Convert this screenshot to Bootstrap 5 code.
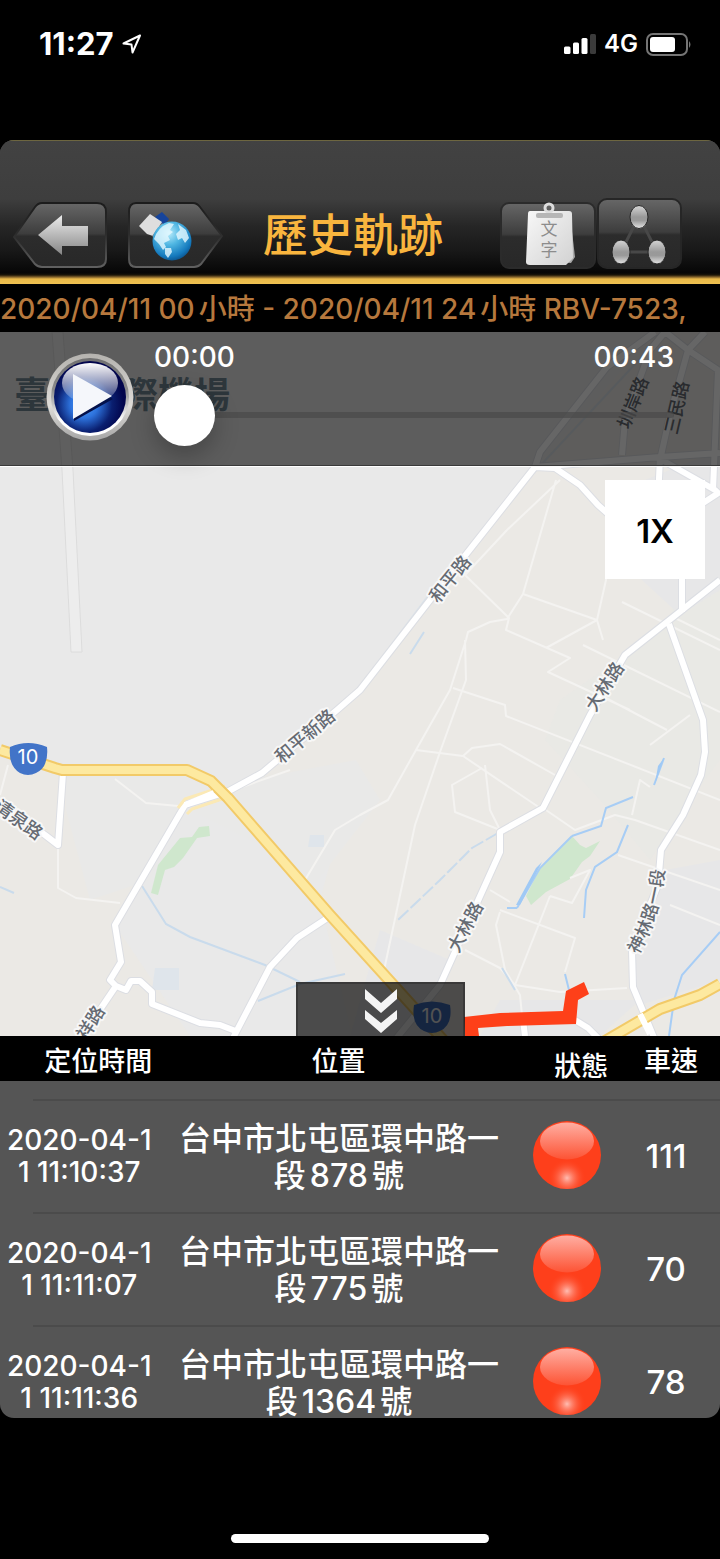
<!DOCTYPE html>
<html lang="zh-Hant">
<head>
<meta charset="utf-8">
<meta name="viewport" content="width=device-width, initial-scale=1">
<title>歷史軌跡</title>
<link rel="stylesheet" href="https://cdn.jsdelivr.net/npm/bootstrap@5.3.0/dist/css/bootstrap.min.css">
<style>
  body { background:#000; color:#fff; font-family:Inter,"Noto Sans CJK TC",sans-serif; }
  .status-bar { height:140px; padding:24px 28px 0 39px; }
  .status-bar > div { height:40px; }
  .clock { font-size:31px; line-height:40px; font-weight:700; }
  .net { font-size:24px; line-height:40px; font-weight:600; }
  .app-shell { border-radius:14px; background:#555; }
  .app-head { height:144px; padding:0 37px 15px 13px; border-top:1px solid #6d6640;
    background:linear-gradient(#424242 0,#3e3e3e 58px,#262626 85px,#181818 110px,#060606 132px,#1c1508 134px,#80602a 136px,#e9b949 138px,#f1c253 144px); }
  .plain-btn { background:none; border:0; padding:0; display:block; color:inherit; }
  .plain-btn svg, .map-art, .battery, .lamp { display:block; }
  .sat-btn { margin-left:21px; }
  .app-title { font-size:45px; line-height:66px; font-weight:500; color:#f9b53e; margin:0; padding-left:40px; }
  .range-bar { height:48px; line-height:50px; font-size:28px; font-weight:500; color:#b6783d; background:#000; }
  .map-area { height:704px; background:#e9e9e9; }
  .map-art { width:100%; height:100%; }
  .player { height:134px; padding:13px 46px 0 46px; gap:20px; background:rgba(0,0,0,.6); border-bottom:1px solid #3a3a3a; box-shadow:0 1px 0 #fff; }
  .play-btn { margin-top:8px; }
  .times { font-size:28px; line-height:24px; font-weight:500; }
  .seek { -webkit-appearance:none; appearance:none; width:100%; height:61px; margin:15px 0 0; background:none; display:block; }
  .seek::-webkit-slider-runnable-track { height:6px; border-radius:3px; background:rgba(74,74,74,.7); }
  .seek::-webkit-slider-thumb { -webkit-appearance:none; width:61px; height:61px; margin-top:-27px; border-radius:50%; background:#fff; box-shadow:0 10px 24px rgba(0,0,0,.25); }
  .speed-btn { width:100px; height:99px; margin:14px 15px 0 auto; padding-top:4px; background:#fff; color:#000; font-size:33px; font-weight:600; }
  .fold-btn { left:calc(50% - 64px); bottom:0; width:169px; height:54px; background:rgba(0,0,0,.68); border:2px solid rgba(40,40,40,.5); border-bottom:0; }
  .list-area { flex:1 1 0; min-height:382px; }
  .track-table { --bs-table-bg:transparent; --bs-table-color:#fff; color:#fff; table-layout:fixed; margin:0; text-align:center; border-collapse:collapse; }
  .track-table th, .track-table td { padding:0; border:0; background:none; box-shadow:none; vertical-align:middle; }
  .track-table thead { background:#000; }
  .track-table thead tr { height:45px; }
  .track-table thead th { font-size:27px; line-height:28px; font-weight:500; padding-top:6px; }
  .track-table thead .head-when { padding-left:38px; }
  .track-table thead .head-state { vertical-align:bottom; padding:0 0 0 32px; }
  .track-table thead .head-kmh { padding-left:10px; }
  .track-table .edge { height:18px; }
  .track-table .point { height:113px; background:linear-gradient(#4b4b4b,#4b4b4b) 33px 0/100% 2px no-repeat; }
  .track-table .when { font-size:28px; line-height:32px; font-weight:500; }
  .track-table .where { font-size:32px; line-height:37px; font-weight:500; padding:2px 9px 0 10px; }
  .track-table .kmh { font-size:33px; line-height:37px; font-weight:500; padding-top:2px; }
  .track-table .state { padding:0 0 2px 4px; }
  .col-when { width:22%; } .col-state { width:13%; } .col-kmh { width:15%; }
  .lamp { margin:0 auto; }
  .home-area { height:141px; padding-bottom:16px; }
  .home-bar { width:258px; height:9px; border-radius:5px; background:#fff; }
</style>
</head>
<body>
<div class="d-flex flex-column min-vh-100">
  <div class="status-bar d-flex justify-content-between">
    <div class="d-flex align-items-center gap-2">
      <span class="clock">11:27</span>
      <svg width="20" height="20" viewBox="0 0 20 20" fill="none" stroke="#fff" stroke-width="2" stroke-linejoin="round" aria-hidden="true"><path d="M18 1.500 1.500 9.500 9.500 10.500 10.500 18.500z"/></svg>
    </div>
    <div class="d-flex align-items-center gap-2">
      <svg width="32" height="20" viewBox="0 0 32 20" aria-hidden="true"><g fill="#fff"><rect x="0" y="12.500" width="6.500" height="7.500" rx="1.500"/><rect x="9" y="8.500" width="6" height="11.500" rx="1.500"/><rect x="17.500" y="4" width="6" height="16" rx="1.500"/></g><rect x="26" y="0" width="6" height="20" rx="1.500" fill="#3b3b3b"/></svg>
      <span class="net">4G</span>
      <svg class="battery" width="46" height="23" viewBox="0 0 46 23" aria-hidden="true"><rect x="1" y="1" width="40" height="21" rx="6" fill="none" stroke="#757575" stroke-width="2"/><rect x="4" y="4" width="25" height="15" rx="3" fill="#fff"/><path d="M43 8q3 3.500 0 7z" fill="#757575"/></svg>
    </div>
  </div>

  <main class="app-shell d-flex flex-column flex-fill overflow-hidden">
    <header class="app-head d-flex align-items-end">
      <button class="plain-btn" type="button" aria-label="返回">
        <svg width="94" height="67" viewBox="0 0 94 67">
          <defs><linearGradient id="btnFace" x2="0" y2="1"><stop stop-color="#676767"/><stop offset=".48" stop-color="#3d3d3d"/><stop offset=".52" stop-color="#2c2c2c"/><stop offset="1" stop-color="#282828"/></linearGradient>
          <linearGradient id="btnEdge" x2="0" y2="1"><stop stop-color="#1c1c1c"/><stop offset=".5" stop-color="#2d2d2d"/><stop offset="1" stop-color="#606060"/></linearGradient>
          <linearGradient id="arrowFill" x2="0" y2="1"><stop stop-color="#ececec"/><stop offset="1" stop-color="#858585"/></linearGradient></defs>
          <path d="M29 1H84Q93 1 93 10V57Q93 65 84 65H29Q25 65 22 62L1 35 22 5Q25 1 29 1z" fill="url(#btnFace)" stroke="url(#btnEdge)" stroke-width="2"/>
          <path d="M25 33 49 13V24H75V44H49V53z" fill="url(#arrowFill)"/>
        </svg>
      </button>
      <button class="plain-btn sat-btn" type="button" aria-label="衛星地圖">
        <svg width="95" height="67" viewBox="0 0 95 67">
          <defs><radialGradient id="globe" cx=".42" cy=".3" r=".75"><stop stop-color="#b9ecfb"/><stop offset=".4" stop-color="#4fb6e2"/><stop offset=".8" stop-color="#1479bd"/><stop offset="1" stop-color="#0a4d85"/></radialGradient></defs>
          <path d="M8 1H65Q69 1 72 5L94 34 73 62Q70 65 66 65H8Q1 65 1 57V10Q1 1 8 1z" fill="url(#btnFace)" stroke="url(#btnEdge)" stroke-width="2"/>
          <path d="M27 15 34 10 41 17 36 24z" fill="#16449b"/><path d="M11 24 22 12 34 20 25 34 19 32z" fill="#dedede"/><path d="M24 34 34 21 38 25 28 37z" fill="#8d8d8d"/>
          <circle cx="44" cy="39" r="19.500" fill="url(#globe)"/>
          <path d="M26 37Q30 25 41 21L46 22 42 28 45 30 40 34 42 38 36 41 38 45 35 48 31 42zM37 46 43 46 44 50 40 56 37 52zM50 22 58 28 61 36 57 41 54 36 50 38 48 32 52 28z" fill="#e6f9ff" opacity=".8"/>
        </svg>
      </button>
      <h1 class="app-title flex-fill text-nowrap">歷史軌跡</h1>
      <button class="plain-btn" type="button" aria-label="文字">
        <svg width="96" height="67" viewBox="0 0 96 67">
          <defs><linearGradient id="paper" x2="1" y2="1"><stop stop-color="#f8f8f8"/><stop offset="1" stop-color="#d2d2d2"/></linearGradient></defs>
          <rect x="1" y="1" width="94" height="65" rx="8" fill="url(#btnFace)" stroke="#2b2b2b" stroke-width="2"/>
          <path d="M34 12H70L75 55 71 61 28 57z" fill="#a9a9a9"/><path d="M30 9H69Q72 9 72 12L73 56 66 63H30Q26 63 26 60L28 12Q28 9 30 9z" fill="url(#paper)"/>
          <circle cx="49" cy="6" r="4" fill="none" stroke="#ddd" stroke-width="3"/><rect x="36" y="11" width="27" height="5" rx="2" fill="#b6b6b6"/>
          <g font-family="Noto Sans CJK TC, sans-serif" font-size="17" fill="#8c8c8c" text-anchor="middle"><text x="49" y="33">文</text><text x="49" y="54">字</text></g>
        </svg>
      </button>
      <button class="plain-btn" type="button" aria-label="軌跡點">
        <svg width="87" height="71" viewBox="0 0 87 71">
          <defs><linearGradient id="node" x2="0" y2="1"><stop stop-color="#d6d6d6"/><stop offset=".5" stop-color="#999"/><stop offset=".65" stop-color="#9a9a9a"/><stop offset="1" stop-color="#e6e6e6"/></linearGradient></defs>
          <rect x="2" y="1" width="83" height="69" rx="9" fill="url(#btnFace)" stroke="#262626" stroke-width="2"/>
          <path d="M43 18 25 54H61z" fill="none" stroke="#484848" stroke-width="3"/>
          <g fill="url(#node)" stroke="#262626"><ellipse cx="43" cy="19" rx="9" ry="11.500"/><ellipse cx="25" cy="54" rx="9" ry="12"/><ellipse cx="61" cy="54" rx="9" ry="12"/></g>
        </svg>
      </button>
    </header>

    <div class="range-bar text-nowrap overflow-hidden">2020/04/11 <span class="me-1">00</span>小時 - 2020/04/11 <span class="me-1">24</span>小時 RBV-7523,</div>

    <section class="map-area position-relative overflow-hidden">
      <div class="position-absolute top-0 start-0 w-100 h-100">
        <svg class="map-art" viewBox="0 332 720 704" preserveAspectRatio="xMidYMid slice" role="img" aria-label="地圖">
          <rect y="332" width="720" height="704" fill="#e9e9e9"/>
          <path d="M655 332 535 470 430 605 360 695 262 778 350 790 320 900 352 1036H0V752L60 770 70 790 185 808 115 925 190 1036 720 1036V332z" fill="#ebe9e5"/>
          <path d="M66 773H190L214 784 182 804 150 880 90 900 66 810zM190 810 260 778 356 760 380 800 310 890 270 850z" fill="#e9e9e8"/>
          <path d="M560 700 610 665 670 620 682 560 720 560V760L690 800 650 860 600 800 545 740z" fill="#e8e8e6" opacity=".7"/>
          <path d="M620 490 720 450V590L680 615 620 560zM665 870 720 860V980L640 1005 632 960zM380 930 450 960 420 1036 350 1036zM500 1000 640 1000 600 1036H480z" fill="#e7e7e8"/>
          <path d="M155 968H179V990H152zM310 835H324V847H308z" fill="#dfe5eb"/>
          <path d="M52 332 62 470 71 652H82L73 470 63 332z" fill="#ededed" stroke="#dcdcdc"/>
          <!-- parks -->
          <g fill="#cfe7cd"><path d="M199 827 209 826 210 836 197 838 183 858 174 867 165 870 158 895 151 893 158 865 180 838 192 837z"/><path d="M572 836 580 845 586 848 600 841 590 856 582 862 570 879 546 892 531 905 526 896 540 868 555 852z"/></g>
          <!-- local lanes -->
          <g fill="none" stroke="#f4f3f1" stroke-width="2" stroke-linejoin="round">
            <path d="M115 779 146 803 178 806M58 845V888L76 898 120 903M8 765 0 795M228 792 290 770M305 880 335 830 360 815 388 800 416 750 450 690 466 640 468 632 490 622 507 619 523 594 556 480M560 480 507 530 465 575 509 618 506 630 570 658 548 672 630 710M523 594 597 620 603 640M546 648 597 620 606 580 608 545M583 645 720 712M622 602 720 650M675 618 720 640M453 688 505 705 506 716 720 800M416 750 463 756 540 808M482 768 452 785 455 812 500 830M485 765 490 810 500 830M463 756 472 748 500 744 555 775M465 640 466 680 440 752 415 825 383 975M650 745 690 715M600 695 667 730M543 808 575 830 615 815 635 820 720 850M632 815 640 780 650 787M618 855 720 890M490 890 510 902M500 912 496 925 505 970 520 995 524 1036M500 910 575 938 565 972M550 896 515 985M550 896 572 903 590 870 570 878M465 950 500 968 515 985M515 985 560 992 627 988M670 905 720 925"/>
          </g>
          <!-- streams -->
          <g fill="none" stroke="#c9dbec" stroke-width="2"><path d="M142 886 166 924 190 937 265 965 300 982M258 1001 300 984 345 974M0 887 14 893"/><path d="M665 332 525 482 425 600 365 680" opacity=".5"/><path d="M424 632 410 654M502 968 515 990"/><path d="M498 833 472 848 440 880 398 920" stroke-dasharray="14 3"/></g>
          <g fill="none" stroke="#a7cdf5" stroke-width="2"><path d="M517 908 540 868 572 836M517 908H507M664 758 654 785M633 797 606 808 601 826 572 836M628 825 617 852 595 867 586 890 584 918M565 974 569 990M720 932 682 975 674 1000 669 1036"/></g>
          <path d="M542 862 520 905 516 905 536 868zM664 758 655 784 658 766zM633 797 608 807 618 803z" fill="#9fc9f5"/>
          <!-- white roads, each drawn over its own casing -->
          <defs><path id="streets" d="M655 332 607 367 540 452 535 467 430 600 360 690 337 710 262 773 227 792 185 805 115 925 121 962 110 980 116 986 66 1060M116 986 126 990 131 981H140L152 992V1004L200 1023 220 1025 238 1032M332 915 297 938 270 967 232 1040M63 773 58 845 45 835 0 803M720 580 672 618 625 655 590 715 543 808 500 832V852L440 985 395 1040M669 624 703 720 705 752 701 775 683 815 661 850 658 885 632 950 633 987 655 1040M535 467 555 468 580 485 598 505 615 520M682 560V612M535 467 660 457 720 453M660 460 670 415 688 350 705 332M660 457 658 500M662 460 715 490 720 495M665 332 688 350 718 370 713 490M720 492 700 505M622 455 625 420 650 350 665 332M575 1020 588 1028 600 1040M523 1020 525 1036"/></defs>
          <g fill="none" stroke-linejoin="round">
            <use href="#streets" stroke="#dcdee3" stroke-width="8"/>
            <use href="#streets" stroke="#fff" stroke-width="6"/>
            <path d="M178 808 185 799 225 786M187 814 192 809 222 799" stroke="#fbe9b5" stroke-width="3"/>
            <path d="M0 750 55 768 62 770H187L211 781 228 798 330 915 445 1042M600 1044 660 1009 700 995 720 984" stroke="#f2ca68" stroke-width="12"/>
            <path d="M0 750 55 768 62 770H187L211 781 228 798 330 915 445 1042M600 1044 660 1009 700 995 720 984" stroke="#fde9a0" stroke-width="8"/>
            <path d="M185 805 214 793M640 1014 650 1034" stroke="#fff" stroke-width="6"/>
          </g>
          <path d="M584 982 589 994 578 1000 576 1024 507 1026 478 1028 479 1036H465L464 1017 500 1013 563 1011 566 991z" fill="#fe4019"/>
          <!-- provincial road shields -->
          <g font-family="Inter, sans-serif" font-size="20" fill="#fff" text-anchor="middle">
            <path d="M10 747Q28 739 47 747 49 767 36 773 28 777 20 773 8 766 10 747z" fill="#4274c8"/><text x="28" y="764">10</text>
            <path d="M414 1005Q432 998 450 1005 453 1025 440 1031 432 1035 424 1031 411 1025 414 1005z" fill="#4274c8"/><text x="432" y="1023">10</text>
          </g>
          <!-- street names -->
          <defs><path id="shenlin" d="M638 955Q662 915 665 864"/></defs>
          <g font-family="Noto Sans CJK TC, sans-serif" font-size="18" font-weight="500" fill="#666b73" stroke="#f7f7f7" stroke-width="4" stroke-linejoin="round" paint-order="stroke" text-anchor="middle">
            <text transform="translate(455 583) rotate(-51)">和平路</text>
            <text transform="translate(309 741) rotate(-40)">和平新路</text>
            <text transform="translate(610 690) rotate(-57)">大林路</text>
            <text transform="translate(471 930) rotate(-62)">大林路</text>
            <text transform="translate(15 825) rotate(35)">清泉路</text>
            <text transform="translate(96 1026) rotate(-58)">祥路</text>
            <text transform="translate(639 405) rotate(-68)" stroke-width="0">圳岸路</text>
            <text transform="translate(683 409) rotate(-77)" stroke-width="0">三民路</text>
            <text text-anchor="start"><textPath href="#shenlin">神林路一段</textPath></text>
          </g>
          <text x="14" y="408" font-family="Noto Sans CJK TC, sans-serif" font-size="36" font-weight="700" fill="#708894">臺中國際機場</text>
        </svg>
      </div>
      <div class="position-relative">
        <div class="player d-flex">
          <div>
            <button class="plain-btn play-btn" type="button" aria-label="播放">
              <svg width="88" height="88" viewBox="0 0 88 88">
                <defs><radialGradient id="orb" cx=".42" cy=".6" r=".55"><stop stop-color="#4fa0ff"/><stop offset=".35" stop-color="#2d72dc"/><stop offset=".7" stop-color="#0a1f70"/><stop offset="1" stop-color="#02054c"/></radialGradient>
                <linearGradient id="ring" x2="0" y2="1"><stop stop-color="#b4b2ae"/><stop offset=".6" stop-color="#dedcd8"/><stop offset="1" stop-color="#a5a5a5"/></linearGradient>
                <linearGradient id="rim" x2="0" y2="1"><stop stop-color="#6f6f6f"/><stop offset=".4" stop-color="#8b8b8b"/><stop offset=".8" stop-color="#fff"/></linearGradient>
                <linearGradient id="gloss" x2="0" y2="1"><stop stop-color="#fff"/><stop offset="1" stop-color="#fff" stop-opacity=".1"/></linearGradient></defs>
                <circle cx="44" cy="44" r="43.500" fill="url(#ring)"/><circle cx="44" cy="44" r="39" fill="url(#rim)"/><circle cx="44" cy="44" r="36" fill="url(#orb)"/>
                <ellipse cx="44" cy="30" rx="28" ry="20" fill="url(#gloss)"/>
                <path d="M28 23V68L67 46z" fill="#03114b"/><path d="M27 21V66L66 43z" fill="#f5f7fb"/>
              </svg>
            </button>
          </div>
          <div class="flex-fill">
            <div class="times d-flex justify-content-between"><span>00:00</span><span>00:43</span></div>
            <input class="seek" type="range" min="0" max="43" value="0" aria-label="播放進度">
          </div>
        </div>
        <button class="plain-btn speed-btn" type="button">1X</button>
      </div>
      <button class="plain-btn fold-btn position-absolute" type="button" aria-label="收合列表">
        <svg class="mx-auto" width="36" height="48" viewBox="0 0 36 48" fill="#f4f4f4"><path d="M2 3 18 17 34 3V13L18 27 2 13zM2 24 18 37 34 24V33L18 47 2 33z"/></svg>
      </button>
    </section>

    <section class="list-area overflow-hidden">
      <table class="table track-table w-100">
        <colgroup><col class="col-when"><col><col class="col-state"><col class="col-kmh"></colgroup>
        <thead><tr><th scope="col" class="head-when">定位時間</th><th scope="col">位置</th><th scope="col" class="head-state">狀態</th><th scope="col" class="head-kmh">車速</th></tr></thead>
        <tbody>
          <tr class="edge" aria-hidden="true"><td colspan="4"></td></tr>
          <tr class="point"><td class="when">2020-04-1<br>1 11:10:37</td><td class="where">台中市北屯區環中路一段<span class="mx-1">878</span>號</td>
            <td class="state"><svg class="lamp" width="70" height="70" viewBox="0 0 70 70" role="img" aria-label="紅燈">
              <defs><linearGradient id="lampTop" x2="0" y2="1"><stop stop-color="#ffaea2"/><stop offset="1" stop-color="#fd5334"/></linearGradient>
              <radialGradient id="lampGlow" gradientUnits="userSpaceOnUse" cx="35" cy="58" r="19"><stop stop-color="#ffbdb2"/><stop offset="1" stop-color="#fe3f1b" stop-opacity="0"/></radialGradient>
              <g id="lampShape"><circle cx="35" cy="35" r="34" fill="#fe3f1b"/><circle cx="35" cy="35" r="34" fill="url(#lampGlow)"/><ellipse cx="35" cy="21" rx="27" ry="18.500" fill="url(#lampTop)"/></g></defs>
              <use href="#lampShape"/></svg></td><td class="kmh">111</td></tr>
          <tr class="point"><td class="when">2020-04-1<br>1 11:11:07</td><td class="where">台中市北屯區環中路一段<span class="mx-1">775</span>號</td>
            <td class="state"><svg class="lamp" width="70" height="70" viewBox="0 0 70 70" role="img" aria-label="紅燈"><use href="#lampShape"/></svg></td><td class="kmh">70</td></tr>
          <tr class="point"><td class="when">2020-04-1<br>1 11:11:36</td><td class="where">台中市北屯區環中路一段<span class="mx-1">1364</span>號</td>
            <td class="state"><svg class="lamp" width="70" height="70" viewBox="0 0 70 70" role="img" aria-label="紅燈"><use href="#lampShape"/></svg></td><td class="kmh">78</td></tr>
        </tbody>
      </table>
    </section>
  </main>

  <div class="home-area d-flex align-items-end justify-content-center"><div class="home-bar"></div></div>
</div>
<script src="https://cdn.jsdelivr.net/npm/bootstrap@5.3.0/dist/js/bootstrap.bundle.min.js"></script>
</body>
</html>
